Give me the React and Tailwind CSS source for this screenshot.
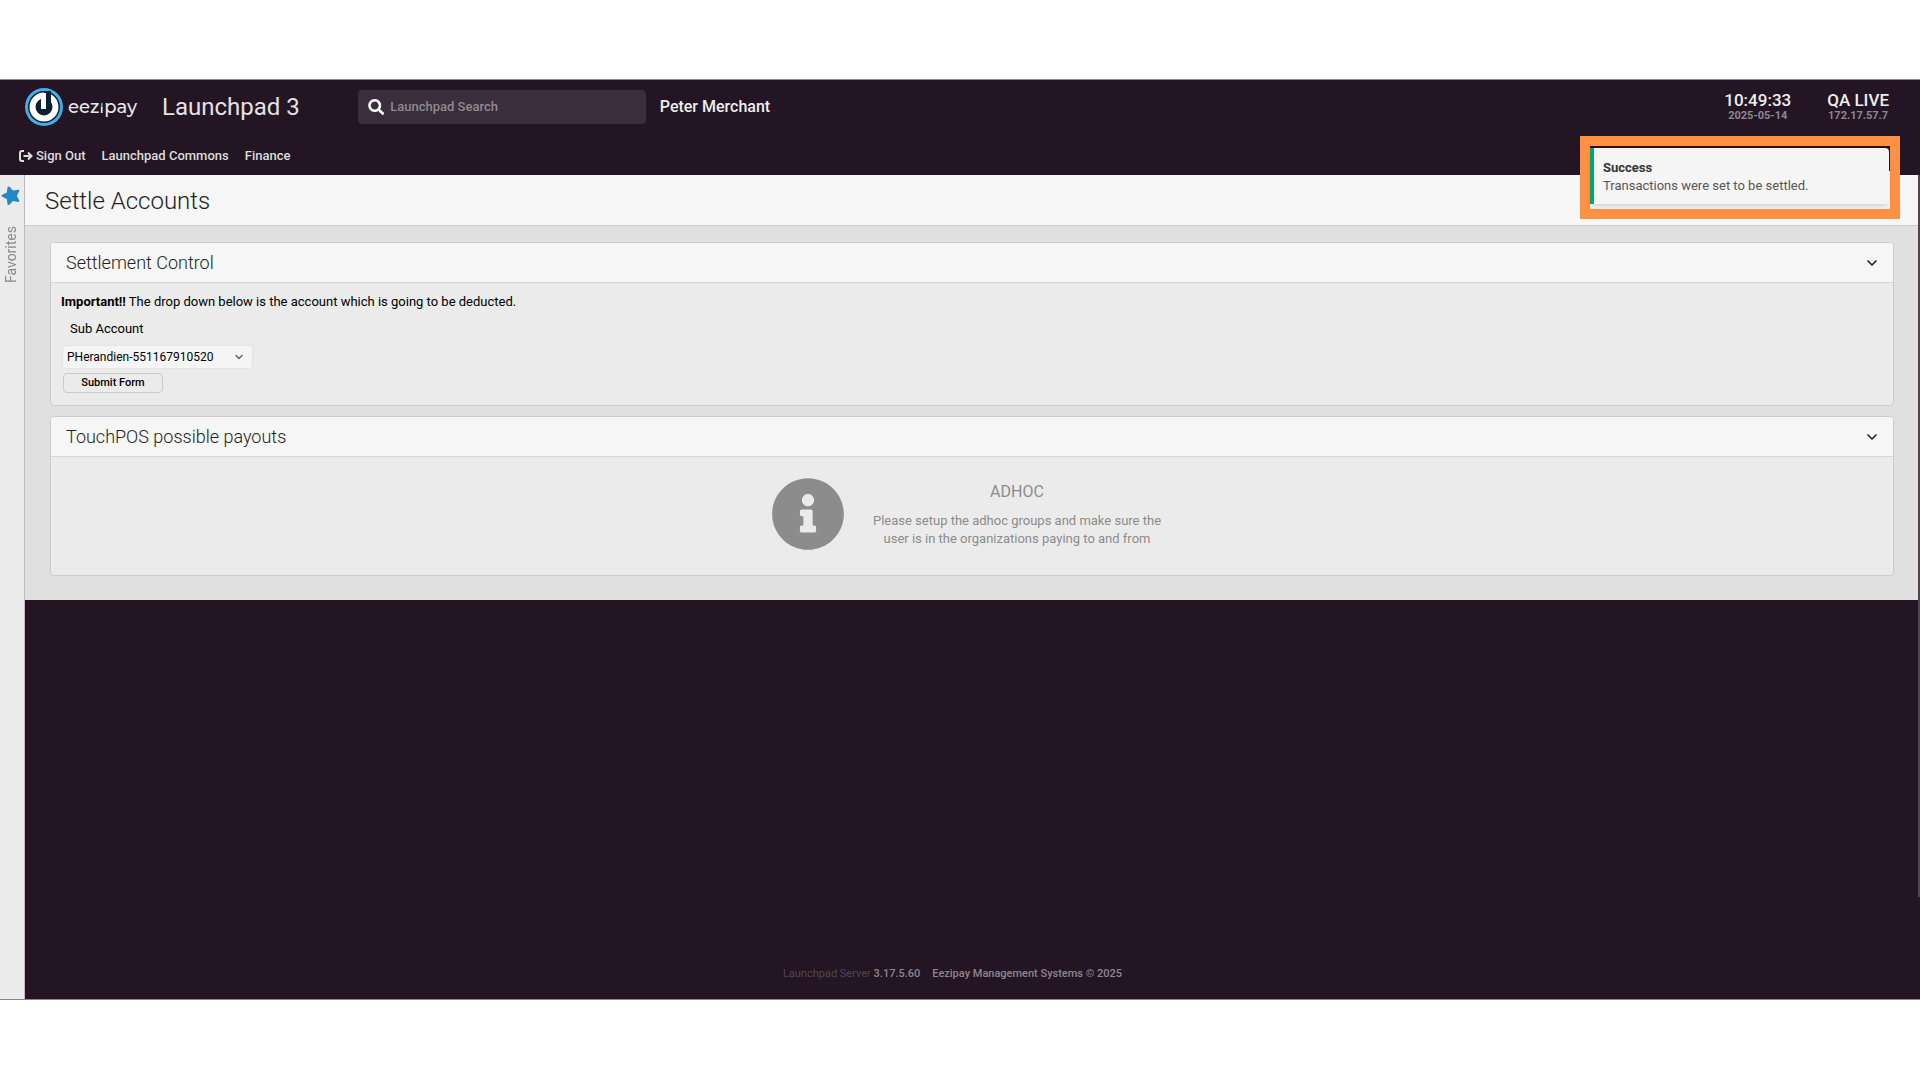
import React, { useState } from "react";
import { FaSearch, FaStar, FaInfoCircle } from "react-icons/fa";
import { ChevronDown } from "lucide-react";

const navLinks = ["Launchpad Commons", "Finance"];
const accounts = ["PHerandien-551167910520"];

function Logo() {
  return (
    <a href="#home" className="flex w-[114px] items-center gap-1 text-[#e8e6e8]">
      <svg viewBox="0 0 40 40" className="h-10 w-10 shrink-0">
        <circle cx="20" cy="20" r="19" fill="#45adea" />
        <circle cx="20" cy="20" r="16" fill="#0b2130" />
        <circle cx="20" cy="20" r="11.5" fill="none" stroke="#fff" strokeWidth="6" />
        <path d="M20 4h7v16h-7z" fill="#0b2130" />
        <path d="M17 6h5v16h-5z" fill="#fff" />
      </svg>
      <span className="font-[Montserrat,Lato,sans-serif] text-lg leading-6 font-medium">
        eez
        <span className="bg-linear-to-b from-[#45adea] from-50% to-[#e8e6e8] to-50% bg-clip-text text-transparent">
          ı
        </span>
        pay
      </span>
    </a>
  );
}

function SignOutIcon() {
  return (
    <svg viewBox="0 0 14 12" className="h-3 w-[14px]" fill="none" stroke="currentColor" strokeWidth="2">
      <path d="M5 1H3a2 2 0 0 0-2 2v6a2 2 0 0 0 2 2h2" />
      <path d="M4.5 6H12M9 2.5 12.5 6 9 9.5" />
    </svg>
  );
}

function Header() {
  return (
    <header className="flex h-24 flex-col justify-between border-t border-[#8d868e] bg-[#231523] pb-[9px] text-[#ddd]">
      <div className="flex items-center pt-[7px] pr-[31px] pl-6">
        <Logo />
        <h1 className="ml-6 text-2xl leading-10 font-normal text-[#e4e2e4]">Launchpad 3</h1>
        <label className="ml-[58px] flex h-[34px] w-72 items-center gap-[6px] rounded bg-[#3b2d3b] px-[10px]">
          <FaSearch className="h-4 w-[18px] text-white" />
          <input
            type="text"
            aria-label="Launchpad Search"
            placeholder="Launchpad Search"
            className="w-full text-[13px] font-medium text-white outline-none placeholder:text-[#918991]"
          />
        </label>
        <span className="ml-[14px] text-base font-medium text-[#eee]">Peter Merchant</span>
        <div className="ml-auto flex gap-9 pb-[2px] text-center">
          <div>
            <div className="text-[17px] leading-5 font-medium text-[#eee]">10:49:33</div>
            <div className="text-[11px] leading-3 font-bold text-[#8f868f]">2025-05-14</div>
          </div>
          <div>
            <div className="text-[17px] leading-5 font-medium text-[#eee]">QA LIVE</div>
            <div className="text-[11px] leading-3 font-bold text-[#8f868f]">172.17.57.7</div>
          </div>
        </div>
      </div>
      <nav className="flex gap-4 px-[19px] text-[13px] leading-5 font-medium">
        <a href="#signout" className="flex items-center gap-[3px]">
          <SignOutIcon />
          Sign Out
        </a>
        {navLinks.map((link) => (
          <a key={link} href="#nav">
            {link}
          </a>
        ))}
      </nav>
    </header>
  );
}

function Panel({ title, children }) {
  const [open, setOpen] = useState(true);

  return (
    <section className="overflow-hidden rounded border border-[#ccc] bg-[#ebebeb]">
      <button
        onClick={() => setOpen(!open)}
        className="flex h-10 w-full items-center justify-between border-b border-[#d5d5d5] bg-[#f6f6f6] pr-[13px] pl-[15px] text-lg font-light text-[#222]"
      >
        {title}
        <ChevronDown size={16} strokeWidth={2.5} />
      </button>
      {open && children}
    </section>
  );
}

function Toast() {
  return (
    <div className="absolute top-[57px] right-5 w-80 border-[10px] border-[#ff9145]">
      <div className="bg-linear-to-b from-[#231523] from-40% to-[#f6f6f6] to-40% pt-[2px] pr-px pb-[5px]">
        <div
          role="status"
          className="rounded-r border-l-4 border-[#00a774] bg-[#f5f5f5] pt-[11px] pr-[10px] pb-[9px] pl-[9px] text-[13px] leading-[18px] text-[#555] shadow-md"
        >
          <div className="font-bold text-[#333]">Success</div>
          <div>Transactions were set to be settled.</div>
        </div>
      </div>
    </div>
  );
}

export default function App() {
  const [account, setAccount] = useState(accounts[0]);

  return (
    <div className="flex min-h-screen flex-col bg-white pt-[79px] pb-20 font-[Roboto,sans-serif]">
      <div className="relative flex flex-1 flex-col border-b border-[#8d868e]">
        <Header />

        <div className="flex flex-1">
          <aside className="flex w-[25px] shrink-0 flex-col items-center gap-[22px] border-r border-[#bbb] bg-[#ebebeb] pt-[11px] pr-[3px]">
            <FaStar className="h-[18px] w-5 shrink-0 -rotate-[18deg] text-[#2389c4]" />
            <span className="rotate-180 text-sm leading-4 text-[#888] [writing-mode:vertical-rl]">Favorites</span>
          </aside>

          <div className="flex min-w-0 flex-1 flex-col bg-[#231523]">
            <main className="bg-[#e0e0e0]">
              <h2 className="border-b border-[#ccc] bg-[#f6f6f6] px-5 pt-[10px] pb-2 text-2xl font-light text-[#222]">
                Settle Accounts
              </h2>

              <div className="flex flex-col gap-[10px] pt-4 pr-[26px] pb-6 pl-[25px]">
                <Panel title="Settlement Control">
                  <form
                    className="px-[10px] pt-[9px] pb-3 text-[13px] leading-5 text-black"
                    onSubmit={(e) => e.preventDefault()}
                  >
                    <p>
                      <b>Important!!</b> The drop down below is the account which is going to be deducted.
                    </p>
                    <label htmlFor="account" className="mt-[7px] block px-[9px]">
                      Sub Account
                    </label>
                    <div className="relative mt-[6px] ml-px w-fit">
                      <select
                        id="account"
                        value={account}
                        onChange={(e) => setAccount(e.target.value)}
                        className="h-6 w-[191px] appearance-none rounded border border-[#e4e4e4] bg-[#f5f5f5] px-1 text-xs"
                      >
                        {accounts.map((a) => (
                          <option key={a}>{a}</option>
                        ))}
                      </select>
                      <ChevronDown
                        size={12}
                        strokeWidth={3}
                        className="pointer-events-none absolute top-[6px] right-2 text-[#666]"
                      />
                    </div>
                    <button className="mt-1 ml-[2px] block h-5 w-[100px] rounded-sm border border-[#ccc] text-[11px] leading-4 font-medium">
                      Submit Form
                    </button>
                  </form>
                </Panel>

                <Panel title="TouchPOS possible payouts">
                  <div className="flex items-center justify-center gap-7 pt-5 pr-3 pb-6 text-center text-[#8c8c8c]">
                    <FaInfoCircle className="h-[74px] w-[74px]" />
                    <div>
                      <h3 className="text-base">ADHOC</h3>
                      <p className="mt-2 text-[13px] leading-[18px]">
                        Please setup the adhoc groups and make sure the
                        <br />
                        user is in the organizations paying to and from
                      </p>
                    </div>
                  </div>
                </Panel>
              </div>
            </main>

            <footer className="mt-auto flex justify-center gap-3 pr-10 pb-[17px] text-[11px] font-medium text-[#8f868f]">
              <span>
                <span className="font-normal text-[#514651]">Launchpad Server</span> 3.17.5.60
              </span>
              <span>Eezipay Management Systems © 2025</span>
            </footer>
          </div>
        </div>

        <div className="absolute top-24 right-0 h-[722px] w-[2px] bg-[#51434f]" />
        <Toast />
      </div>
    </div>
  );
}
